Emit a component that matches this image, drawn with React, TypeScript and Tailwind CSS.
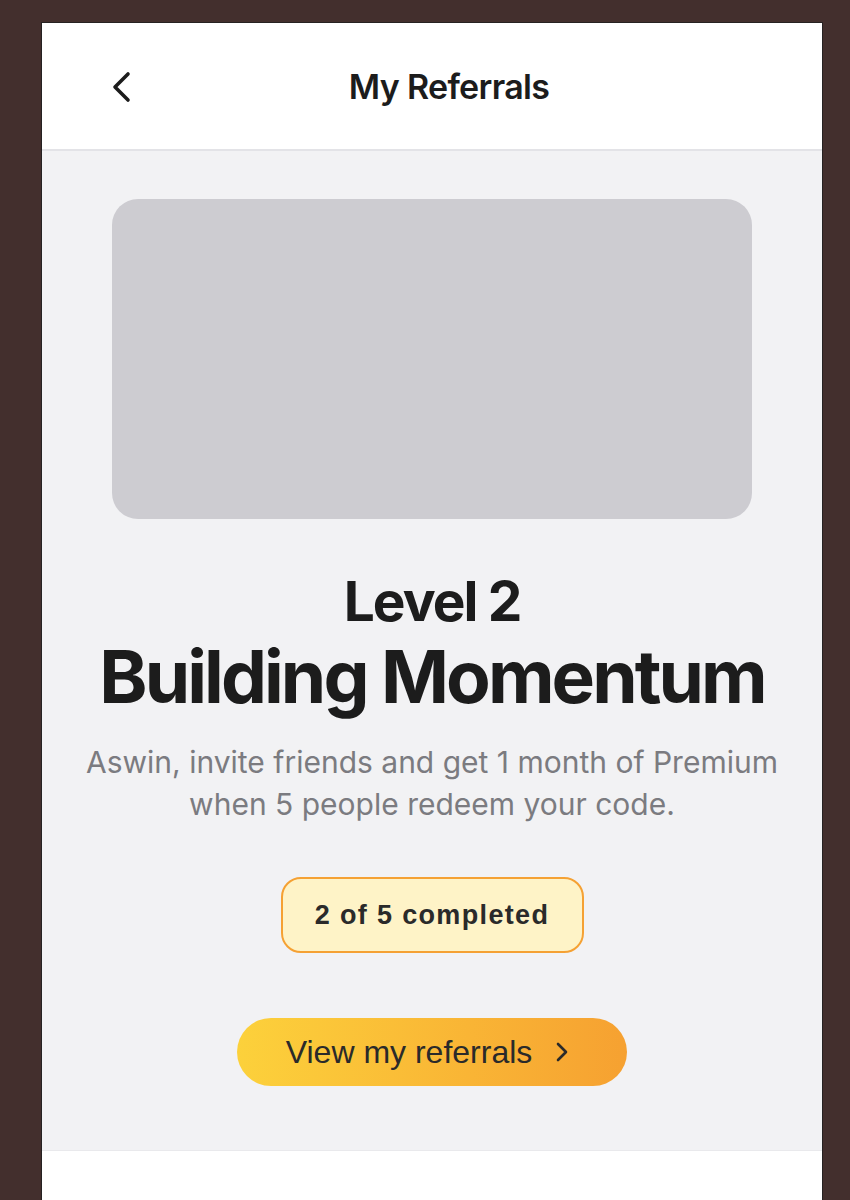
export default function App() {
  return (
    <div className="min-h-screen bg-[#432f2d] pt-[22px] pl-[41px] pr-[27px]" style={{ fontFamily: 'Inter, "Noto Sans", sans-serif' }}>
      <div className="border-x border-t border-[#262222] bg-white min-h-[1180px]">
        <header className="h-[128px] flex items-center border-b-2 border-[#e3e3e7] relative">
          <button className="absolute left-[64px] top-[44px] w-[32px] h-[40px] flex items-center justify-center">
            <svg width="20" height="32" viewBox="0 0 20 32" fill="none">
              <polyline points="16,3 3,16 16,29" stroke="#1c1c1c" strokeWidth="3.6" strokeLinecap="round" strokeLinejoin="round" />
            </svg>
          </button>
          <h1 className="flex-1 text-center pl-[34px] text-[34px] font-semibold tracking-[-0.02em] text-[#1c1c1c]">My Referrals</h1>
        </header>

        <section className="bg-[#f2f2f4] pt-[48px] pb-[64px] flex flex-col items-center border-b border-[#e9e9ec]">
          <div className="w-[640px] h-[320px] rounded-[26px] bg-[#cdccd1]" />

          <h2 className="mt-[52px] text-[55px] leading-[60px] font-bold tracking-[-0.035em] text-[#1c1c1c]">Level 2</h2>
          <h3 className="mt-[6px] text-[73px] leading-[80px] font-bold tracking-[-0.04em] text-[#1c1c1c]">Building Momentum</h3>
          <p className="mt-[24px] text-[30px] leading-[42px] text-center text-[#7b7b80]">
            Aswin, invite friends and get 1 month of Premium
            <br />
            when 5 people redeem your code.
          </p>

          <div className="mt-[52px] w-[303px] h-[76px] rounded-[20px] border-2 border-[#f5a133] bg-[#fef3c7] flex items-center justify-center">
            <span className="text-[27px] font-bold tracking-[0.05em] text-[#2a2a2a]" style={{ fontFamily: '"Liberation Sans", Arial, sans-serif' }}>
              2 of 5 completed
            </span>
          </div>

          <button className="mt-[65px] w-[390px] h-[68px] rounded-full bg-gradient-to-r from-[#fcd13b] to-[#f6a131] flex items-center justify-center gap-[24px] pr-[10px]">
            <span className="text-[32px] text-[#2a2a2a]" style={{ fontFamily: '"Liberation Sans", Arial, sans-serif' }}>View my referrals</span>
            <svg width="12" height="20" viewBox="0 0 12 20" fill="none">
              <polyline points="2,2 10,10 2,18" stroke="#2a2a2a" strokeWidth="2.6" strokeLinecap="round" strokeLinejoin="round" />
            </svg>
          </button>
        </section>
      </div>
    </div>
  );
}
